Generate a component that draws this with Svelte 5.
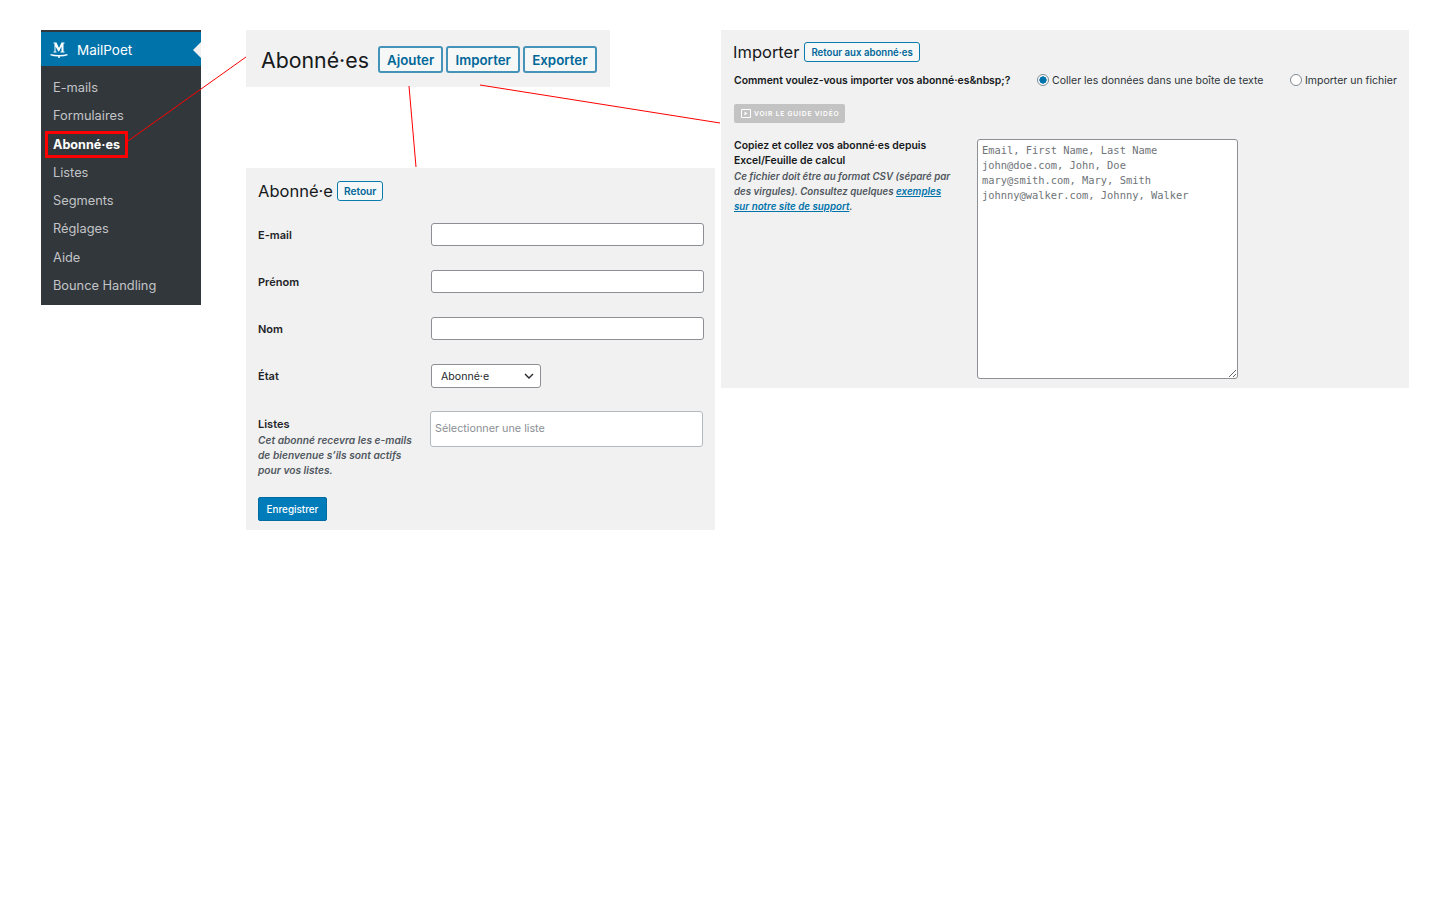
<script lang="ts">
const menu = ['E-mails', 'Formulaires', 'Abonné·es', 'Listes', 'Segments', 'Réglages', 'Aide', 'Bounce Handling'];
const sample = 'Email, First Name, Last Name\njohn@doe.com, John, Doe\nmary@smith.com, Mary, Smith\njohnny@walker.com, Johnny, Walker';
const fields = ['E-mail', 'Prénom', 'Nom'];
</script>

<div class="canvas">
	<nav class="sidebar">
		<div class="brand">
			<svg class="logo" width="18" height="18" viewBox="0 0 18 18" aria-hidden="true">
				<path d="M3.500 11.500v-1h1V2.500h-1v-1h3L9 7l2.500-5.500h3v1h-1v8h1v1h-4v-1h1V5.500L9 10.500h-.6L5.500 5.500v5h1v1z" fill="#fff" />
				<path d="M.5 13.600c2.500 1 5.500 1.200 8.500 1.200s6-.2 8.500-1.200M9 14.800v2.200" fill="none" stroke="#fff" stroke-width="1.500" />
			</svg>
			<span>MailPoet</span>
			<i class="notch"></i>
		</div>
		<ul>
			{#each menu as item}
				<li class:current={item === 'Abonné·es'}>{item}</li>
			{/each}
		</ul>
	</nav>

	<section class="panel head-panel">
		<h1>Abonné·es</h1>
		<div class="actions">
			<button class="outline">Ajouter</button>
			<button class="outline">Importer</button>
			<button class="outline">Exporter</button>
		</div>
	</section>

	<section class="panel form-panel">
		<div class="title-row">
			<h2>Abonné·e</h2>
			<button class="outline small">Retour</button>
		</div>
		<div class="rows">
			{#each fields as field}
				<div class="row">
					<label for={field}>{field}</label>
					<input id={field} type="text" />
				</div>
			{/each}
			<div class="row">
				<label for="state">État</label>
				<div class="select">
					<span id="state">Abonné·e</span>
					<svg width="10" height="6" viewBox="0 0 10 6" aria-hidden="true"><path d="M1 1l4 4 4-4" fill="none" stroke="#23282d" stroke-width="1.400" /></svg>
				</div>
			</div>
			<div class="row lists">
				<div>
					<strong>Listes</strong>
					<p class="help">Cet abonné recevra les e-mails de bienvenue s’ils sont actifs pour vos listes.</p>
				</div>
				<div class="picker">Sélectionner une liste</div>
			</div>
		</div>
		<button class="primary">Enregistrer</button>
	</section>

	<section class="panel import-panel">
		<div class="title-row">
			<h2>Importer</h2>
			<button class="outline small">Retour aux abonné·es</button>
		</div>
		<div class="question">
			<strong>Comment voulez-vous importer vos abonné·es&amp;nbsp;?</strong>
			<span class="radio-a"><i class="radio on"></i>Coller les données dans une boîte de texte</span>
			<span class="radio-b"><i class="radio"></i>Importer un fichier</span>
		</div>
		<div class="video">
			<svg width="10" height="9" viewBox="0 0 10 9" aria-hidden="true">
				<path d="M.5.5h9v8h-9z" fill="none" stroke="#fff" />
				<path d="M3.500 2.500l3 2-3 2z" fill="#fff" />
			</svg>
			Voir le guide vidéo
		</div>
		<div class="paste">
			<div class="paste-text">
				<strong>Copiez et collez vos abonné·es depuis Excel/Feuille de calcul</strong>
				<p class="help">Ce fichier doit être au format CSV (séparé par des virgules). Consultez quelques <a href="#top">exemples</a><br /><a href="#top">sur notre site de support</a>.</p>
			</div>
			<textarea placeholder={sample}></textarea>
		</div>
	</section>

	<svg class="lines" width="1440" height="900" aria-hidden="true">
		<line x1="128" y1="141" x2="246" y2="57" />
		<line x1="409" y1="86" x2="416" y2="167" />
		<line x1="480" y1="85" x2="720" y2="123" />
	</svg>
</div>

<style>
:global(body) {
	background: #fff;
	font-family: Inter, "Liberation Sans", sans-serif;
	color: #1d2327;
}

.canvas {
	position: relative;
	width: 1440px;
	height: 900px;
	overflow: hidden;
}

.lines {
	position: absolute;
	inset: 0;
	pointer-events: none;
}

.lines line {
	stroke: #f00;
	stroke-width: 1;
}

.sidebar {
	position: absolute;
	left: 41px;
	top: 30px;
	width: 160px;
	height: 275px;
	background: #32373c;
	border-top: 2px solid #32373c;
	box-sizing: border-box;
}

.brand {
	position: relative;
	display: flex;
	align-items: center;
	gap: 9px;
	height: 34px;
	box-sizing: border-box;
	padding: 1px 0 0 9px;
	background: #0073aa;
	color: #fff;
	font-size: 13.500px;
}

.notch {
	position: absolute;
	right: 0;
	top: 10px;
	border: 8px solid transparent;
	border-right-color: #f1f1f1;
	border-left-width: 0;
}

.sidebar ul {
	list-style: none;
	margin: 0;
	padding: 8px 0 0;
}

.sidebar li {
	height: 28.3px;
	line-height: 28.3px;
	padding-left: 12px;
	color: #c3c4c7;
	font-size: 12.800px;
}

.sidebar li.current {
	position: relative;
	color: #fff;
	font-size: 12.600px;
	font-weight: 700;
}

.sidebar li.current::after {
	content: "";
	position: absolute;
	left: 4px;
	top: 0;
	width: 83px;
	height: 27px;
	box-sizing: border-box;
	border: 3px solid #f00;
}

.panel {
	position: absolute;
	background: #f1f1f1;
	box-sizing: border-box;
}

.head-panel {
	left: 246px;
	top: 30px;
	width: 364px;
	height: 57px;
	display: flex;
	align-items: center;
	padding: 2px 0 0 15px;
}

h1, h2 {
	margin: 0;
	font-weight: 400;
	color: #16191c;
}

h1 {
	font-size: 21.300px;
	margin-right: 9px;
}

h2 {
	font-size: 16.500px;
}

.actions {
	display: flex;
	gap: 3px;
}

button {
	font-family: inherit;
	cursor: pointer;
}

.outline {
	height: 27px;
	padding: 0 7.200px;
	background: #f6f7f7;
	border: 2px solid #4593b9;
	border-radius: 3px;
	color: #006799;
	font-size: 13.300px;
	font-weight: 600;
}

.outline.small {
	height: 20px;
	padding: 0 6px;
	border-width: 1px;
	border-color: #0a7bad;
	font-size: 10.200px;
}

.form-panel {
	left: 246px;
	top: 168px;
	width: 469px;
	height: 362px;
	padding: 13px 11px 0 12px;
}

.title-row {
	display: flex;
	align-items: center;
	gap: 4px;
}

.rows {
	display: flex;
	flex-direction: column;
	gap: 24px;
	margin-top: 22px;
}

.row {
	display: grid;
	grid-template-columns: 173px 273px;
	align-items: center;
	font-size: 11px;
	font-weight: 600;
}

.row label, .row strong {
	font-weight: 600;
}

.row input {
	height: 23px;
	padding: 0;
	box-sizing: border-box;
	background: #fff;
	border: 1px solid #8c8f94;
	border-radius: 3px;
}

.select {
	display: flex;
	align-items: center;
	justify-content: space-between;
	width: 110px;
	height: 24px;
	box-sizing: border-box;
	padding: 0 6px 0 9px;
	background: #fff;
	border: 1px solid #8c8f94;
	border-radius: 3px;
	font-weight: 400;
	font-size: 10.600px;
	color: #23282d;
}

.row.lists {
	align-items: start;
	margin-top: -1px;
	grid-template-columns: 172px 273px;
}

.row.lists strong {
	display: block;
	margin-top: 6px;
}

.row.lists .help {
	max-width: 158px;
}

.help {
	margin: 2px 0 0;
	font-size: 10.200px;
	line-height: 15px;
	font-style: italic;
	font-weight: 600;
	color: #50575e;
}

.picker {
	height: 36px;
	box-sizing: border-box;
	padding: 0 4px;
	line-height: 33px;
	background: #fff;
	border: 1px solid #b4b9be;
	border-radius: 3px;
	font-weight: 400;
	font-size: 10.800px;
	color: #8a8f94;
}

.primary {
	display: block;
	height: 24px;
	width: 69px;
	margin-top: 19px;
	padding: 0;
	background: #007cba;
	border: 1px solid #006ba1;
	border-radius: 2px;
	color: #fff;
	font-size: 9.900px;
	font-weight: 500;
}

.import-panel {
	left: 721px;
	top: 30px;
	width: 688px;
	height: 358px;
	padding: 12px 0 0 12px;
}

.import-panel .title-row {
	gap: 5px;
}

.import-panel .outline.small {
	font-size: 9.650px;
}

.question {
	display: flex;
	align-items: center;
	margin: 10px 0 0 1px;
	height: 16px;
	font-size: 10.500px;
	color: #2c3338;
}

.question strong {
	width: 303px;
	font-size: 10.400px;
	font-weight: 600;
	color: #16191c;
}

.question span {
	display: flex;
	align-items: center;
}

.radio-a {
	width: 253px;
}

.radio {
	width: 12px;
	height: 12px;
	box-sizing: border-box;
	margin-right: 3px;
	background: #fff;
	border: 1px solid #7e8993;
	border-radius: 50%;
}

.radio.on {
	background: radial-gradient(circle, #0073aa 0 3.400px, #fff 3.900px);
}

.video {
	display: flex;
	align-items: center;
	gap: 3px;
	width: 111px;
	height: 19px;
	box-sizing: border-box;
	margin: 16px 0 0 1px;
	padding-left: 7px;
	background: #c3c3c3;
	border-radius: 2px;
	color: #fff;
	font-size: 6.700px;
	font-weight: 600;
	letter-spacing: 0.800px;
	text-transform: uppercase;
}

.paste {
	display: flex;
	align-items: flex-start;
	margin-top: 15px;
}

.paste-text {
	width: 222px;
	margin: 0 21px 0 1px;
	font-size: 10.400px;
	line-height: 15px;
}

.paste-text strong {
	font-weight: 600;
	color: #16191c;
}

.paste-text .help {
	margin-top: 1px;
	font-size: 9.750px;
}

.paste-text a {
	color: #0073aa;
	font-weight: 600;
}

textarea {
	width: 261px;
	height: 240px;
	box-sizing: border-box;
	margin: 1px 0 0;
	padding: 3px 4px;
	background: #fff;
	border: 1px solid #8c8f94;
	border-radius: 3px;
	font-family: "DejaVu Sans Mono", "Liberation Mono", monospace;
	font-size: 10.400px;
	line-height: 15px;
}

textarea::placeholder {
	color: #6f7478;
	opacity: 1;
}
</style>
